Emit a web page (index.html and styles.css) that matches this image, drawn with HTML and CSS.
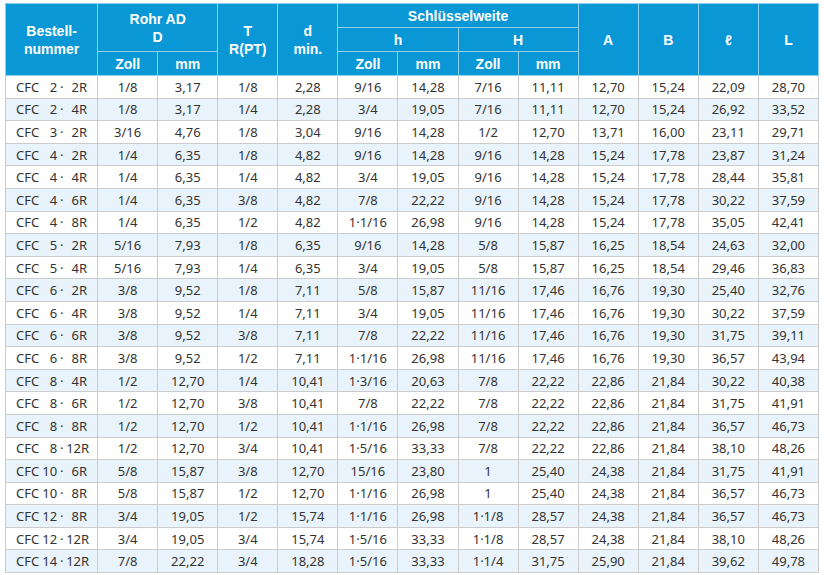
FILE: index.html
```html
<!DOCTYPE html>
<html lang="de">
<head>
<meta charset="utf-8">
<title>CFC Tabelle</title>
<link rel="stylesheet" href="styles.css">
</head>
<body>
<table class="spec">
  <colgroup>
    <col class="c-first">
    <col><col><col><col><col><col><col><col><col><col><col><col>
  </colgroup>
  <thead>
    <tr class="h1">
      <th rowspan="3">Bestell-<br>nummer</th>
      <th colspan="2" rowspan="2">Rohr AD<br>D</th>
      <th rowspan="3">T<br>R(PT)</th>
      <th rowspan="3">d<br>min.</th>
      <th colspan="4">Schlüsselweite</th>
      <th rowspan="3">A</th>
      <th rowspan="3">B</th>
      <th rowspan="3">ℓ</th>
      <th rowspan="3">L</th>
    </tr>
    <tr class="h2">
      <th colspan="2">h</th>
      <th colspan="2">H</th>
    </tr>
    <tr class="h3">
      <th>Zoll</th><th>mm</th>
      <th>Zoll</th><th>mm</th>
      <th>Zoll</th><th>mm</th>
    </tr>
  </thead>
  <tbody>
    <tr><td><span class="code"><span class="pre">CFC</span><span class="na">2</span><span class="dot">·</span><span class="nb">2R</span></span></td><td>1/8</td><td>3,17</td><td>1/8</td><td>2,28</td><td>9/16</td><td>14,28</td><td>7/16</td><td>11,11</td><td>12,70</td><td>15,24</td><td>22,09</td><td>28,70</td></tr>
    <tr><td><span class="code"><span class="pre">CFC</span><span class="na">2</span><span class="dot">·</span><span class="nb">4R</span></span></td><td>1/8</td><td>3,17</td><td>1/4</td><td>2,28</td><td>3/4</td><td>19,05</td><td>7/16</td><td>11,11</td><td>12,70</td><td>15,24</td><td>26,92</td><td>33,52</td></tr>
    <tr><td><span class="code"><span class="pre">CFC</span><span class="na">3</span><span class="dot">·</span><span class="nb">2R</span></span></td><td>3/16</td><td>4,76</td><td>1/8</td><td>3,04</td><td>9/16</td><td>14,28</td><td>1/2</td><td>12,70</td><td>13,71</td><td>16,00</td><td>23,11</td><td>29,71</td></tr>
    <tr><td><span class="code"><span class="pre">CFC</span><span class="na">4</span><span class="dot">·</span><span class="nb">2R</span></span></td><td>1/4</td><td>6,35</td><td>1/8</td><td>4,82</td><td>9/16</td><td>14,28</td><td>9/16</td><td>14,28</td><td>15,24</td><td>17,78</td><td>23,87</td><td>31,24</td></tr>
    <tr><td><span class="code"><span class="pre">CFC</span><span class="na">4</span><span class="dot">·</span><span class="nb">4R</span></span></td><td>1/4</td><td>6,35</td><td>1/4</td><td>4,82</td><td>3/4</td><td>19,05</td><td>9/16</td><td>14,28</td><td>15,24</td><td>17,78</td><td>28,44</td><td>35,81</td></tr>
    <tr><td><span class="code"><span class="pre">CFC</span><span class="na">4</span><span class="dot">·</span><span class="nb">6R</span></span></td><td>1/4</td><td>6,35</td><td>3/8</td><td>4,82</td><td>7/8</td><td>22,22</td><td>9/16</td><td>14,28</td><td>15,24</td><td>17,78</td><td>30,22</td><td>37,59</td></tr>
    <tr><td><span class="code"><span class="pre">CFC</span><span class="na">4</span><span class="dot">·</span><span class="nb">8R</span></span></td><td>1/4</td><td>6,35</td><td>1/2</td><td>4,82</td><td>1·1/16</td><td>26,98</td><td>9/16</td><td>14,28</td><td>15,24</td><td>17,78</td><td>35,05</td><td>42,41</td></tr>
    <tr><td><span class="code"><span class="pre">CFC</span><span class="na">5</span><span class="dot">·</span><span class="nb">2R</span></span></td><td>5/16</td><td>7,93</td><td>1/8</td><td>6,35</td><td>9/16</td><td>14,28</td><td>5/8</td><td>15,87</td><td>16,25</td><td>18,54</td><td>24,63</td><td>32,00</td></tr>
    <tr><td><span class="code"><span class="pre">CFC</span><span class="na">5</span><span class="dot">·</span><span class="nb">4R</span></span></td><td>5/16</td><td>7,93</td><td>1/4</td><td>6,35</td><td>3/4</td><td>19,05</td><td>5/8</td><td>15,87</td><td>16,25</td><td>18,54</td><td>29,46</td><td>36,83</td></tr>
    <tr><td><span class="code"><span class="pre">CFC</span><span class="na">6</span><span class="dot">·</span><span class="nb">2R</span></span></td><td>3/8</td><td>9,52</td><td>1/8</td><td>7,11</td><td>5/8</td><td>15,87</td><td>11/16</td><td>17,46</td><td>16,76</td><td>19,30</td><td>25,40</td><td>32,76</td></tr>
    <tr><td><span class="code"><span class="pre">CFC</span><span class="na">6</span><span class="dot">·</span><span class="nb">4R</span></span></td><td>3/8</td><td>9,52</td><td>1/4</td><td>7,11</td><td>3/4</td><td>19,05</td><td>11/16</td><td>17,46</td><td>16,76</td><td>19,30</td><td>30,22</td><td>37,59</td></tr>
    <tr><td><span class="code"><span class="pre">CFC</span><span class="na">6</span><span class="dot">·</span><span class="nb">6R</span></span></td><td>3/8</td><td>9,52</td><td>3/8</td><td>7,11</td><td>7/8</td><td>22,22</td><td>11/16</td><td>17,46</td><td>16,76</td><td>19,30</td><td>31,75</td><td>39,11</td></tr>
    <tr><td><span class="code"><span class="pre">CFC</span><span class="na">6</span><span class="dot">·</span><span class="nb">8R</span></span></td><td>3/8</td><td>9,52</td><td>1/2</td><td>7,11</td><td>1·1/16</td><td>26,98</td><td>11/16</td><td>17,46</td><td>16,76</td><td>19,30</td><td>36,57</td><td>43,94</td></tr>
    <tr><td><span class="code"><span class="pre">CFC</span><span class="na">8</span><span class="dot">·</span><span class="nb">4R</span></span></td><td>1/2</td><td>12,70</td><td>1/4</td><td>10,41</td><td>1·3/16</td><td>20,63</td><td>7/8</td><td>22,22</td><td>22,86</td><td>21,84</td><td>30,22</td><td>40,38</td></tr>
    <tr><td><span class="code"><span class="pre">CFC</span><span class="na">8</span><span class="dot">·</span><span class="nb">6R</span></span></td><td>1/2</td><td>12,70</td><td>3/8</td><td>10,41</td><td>7/8</td><td>22,22</td><td>7/8</td><td>22,22</td><td>22,86</td><td>21,84</td><td>31,75</td><td>41,91</td></tr>
    <tr><td><span class="code"><span class="pre">CFC</span><span class="na">8</span><span class="dot">·</span><span class="nb">8R</span></span></td><td>1/2</td><td>12,70</td><td>1/2</td><td>10,41</td><td>1·1/16</td><td>26,98</td><td>7/8</td><td>22,22</td><td>22,86</td><td>21,84</td><td>36,57</td><td>46,73</td></tr>
    <tr><td><span class="code"><span class="pre">CFC</span><span class="na">8</span><span class="dot">·</span><span class="nb">12R</span></span></td><td>1/2</td><td>12,70</td><td>3/4</td><td>10,41</td><td>1·5/16</td><td>33,33</td><td>7/8</td><td>22,22</td><td>22,86</td><td>21,84</td><td>38,10</td><td>48,26</td></tr>
    <tr><td><span class="code"><span class="pre">CFC</span><span class="na">10</span><span class="dot">·</span><span class="nb">6R</span></span></td><td>5/8</td><td>15,87</td><td>3/8</td><td>12,70</td><td>15/16</td><td>23,80</td><td>1</td><td>25,40</td><td>24,38</td><td>21,84</td><td>31,75</td><td>41,91</td></tr>
    <tr><td><span class="code"><span class="pre">CFC</span><span class="na">10</span><span class="dot">·</span><span class="nb">8R</span></span></td><td>5/8</td><td>15,87</td><td>1/2</td><td>12,70</td><td>1·1/16</td><td>26,98</td><td>1</td><td>25,40</td><td>24,38</td><td>21,84</td><td>36,57</td><td>46,73</td></tr>
    <tr><td><span class="code"><span class="pre">CFC</span><span class="na">12</span><span class="dot">·</span><span class="nb">8R</span></span></td><td>3/4</td><td>19,05</td><td>1/2</td><td>15,74</td><td>1·1/16</td><td>26,98</td><td>1·1/8</td><td>28,57</td><td>24,38</td><td>21,84</td><td>36,57</td><td>46,73</td></tr>
    <tr><td><span class="code"><span class="pre">CFC</span><span class="na">12</span><span class="dot">·</span><span class="nb">12R</span></span></td><td>3/4</td><td>19,05</td><td>3/4</td><td>15,74</td><td>1·5/16</td><td>33,33</td><td>1·1/8</td><td>28,57</td><td>24,38</td><td>21,84</td><td>38,10</td><td>48,26</td></tr>
    <tr><td><span class="code"><span class="pre">CFC</span><span class="na">14</span><span class="dot">·</span><span class="nb">12R</span></span></td><td>7/8</td><td>22,22</td><td>3/4</td><td>18,28</td><td>1·5/16</td><td>33,33</td><td>1·1/4</td><td>31,75</td><td>25,90</td><td>21,84</td><td>39,62</td><td>49,78</td></tr>
  </tbody>
</table>
</body>
</html>
```

FILE: styles.css
```css
html, body {
  margin: 0;
  background: #ffffff;
}

body {
  padding: 3px 0 0 5px;
}

.spec {
  border-collapse: collapse;
  table-layout: fixed;
  width: 814px;
}

.spec col {
  width: 60px;
}

.spec col.c-first {
  width: 92px;
}

.spec th {
  background: #0a97d6;
  color: #ffffff;
  font-family: "Liberation Sans", Arial, sans-serif;
  font-weight: bold;
  font-size: 14px;
  line-height: 18px;
  border: 1px solid #8fd1f0;
  height: 23px;
  padding: 0;
  text-align: center;
  vertical-align: middle;
}

.spec td {
  font-family: "Noto Sans", "DejaVu Sans Condensed", sans-serif;
  font-size: 13px;
  color: #333333;
  border: 1px solid #cbcbcb;
  height: 21.6px;
  padding: 0;
  text-align: center;
  vertical-align: middle;
}

.spec tbody tr:nth-child(even) td {
  background: #e9f3fb;
}

.code {
  display: inline-flex;
  align-items: baseline;
  white-space: nowrap;
}

.pre {
  display: inline-block;
  margin-right: 3px;
}

.na {
  display: inline-block;
  width: 15px;
  text-align: right;
}

.dot {
  display: inline-block;
  width: 9px;
  text-align: center;
}

.nb {
  display: inline-block;
  width: 21px;
  text-align: right;
}
```
